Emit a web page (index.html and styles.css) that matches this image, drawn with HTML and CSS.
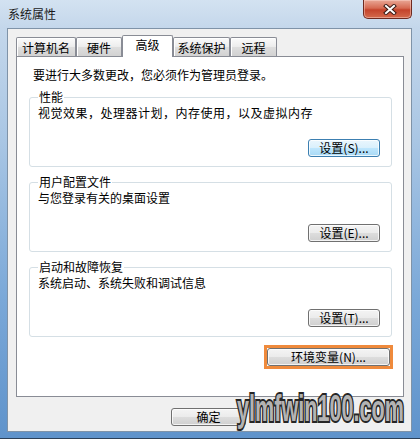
FILE: index.html
```html
<!doctype html>
<html>
<head>
    <meta charset="UTF-8">
    <link rel="stylesheet" href="styles.css">
</head>
<body>
    <div class="window">
        <div class="titlebar">
            <span class="title">系统属性</span>
            <button class="close" title="关闭">
                <svg width="14" height="11" viewBox="0 0 14 11">
                    <path d="M3 2 L11 9 M11 2 L3 9" stroke="#3a1a14" stroke-width="4" stroke-linecap="square"/>
                    <path d="M3 2 L11 9 M11 2 L3 9" stroke="#fff" stroke-width="2" stroke-linecap="square"/>
                </svg>
            </button>
        </div>
        <div class="client">
            <ul class="tabs">
                <li class="tab tab-name">计算机名</li>
                <li class="tab tab-hw">硬件</li>
                <li class="tab tab-adv active">高级</li>
                <li class="tab tab-prot">系统保护</li>
                <li class="tab tab-remote">远程</li>
            </ul>
            <div class="panel">
                <p class="note">要进行大多数更改，您必须作为管理员登录。</p>

                <fieldset class="group">
                    <legend>性能</legend>
                    <p class="desc desc-wide">视觉效果，处理器计划，内存使用，以及虚拟内存</p>
                    <div class="group-actions">
                        <button class="btn btn-set btn-hot">设置(S)...</button>
                    </div>
                </fieldset>

                <fieldset class="group">
                    <legend>用户配置文件</legend>
                    <p class="desc">与您登录有关的桌面设置</p>
                    <div class="group-actions">
                        <button class="btn btn-set">设置(E)...</button>
                    </div>
                </fieldset>

                <fieldset class="group">
                    <legend>启动和故障恢复</legend>
                    <p class="desc">系统启动、系统失败和调试信息</p>
                    <div class="group-actions">
                        <button class="btn btn-set">设置(T)...</button>
                    </div>
                </fieldset>

                <div class="env-row">
                    <span class="ring">
                        <button class="btn btn-env">环境变量(N)...</button>
                    </span>
                </div>
            </div>
            <div class="actions">
                <button class="btn btn-ok">确定</button>
            </div>
        </div>
        <div class="watermark">ylmfwin100.com</div>
    </div>
</body>
</html>
```

FILE: styles.css
```css
* {
    box-sizing: border-box;
}
body {
    margin: 0;
    width: 420px;
    height: 439px;
    overflow: hidden;
    background-color: #23364c;
    font-family: "Noto Sans CJK SC", sans-serif;
    font-size: 12px;
    color: #000;
}

/* aero frame */
.window {
    position: relative;
    width: 420px;
    height: 439px;
    padding: 0 8px 6px 7px;
    display: flex;
    flex-direction: column;
    background: linear-gradient(to bottom, #d3e2f1 0, #c4d7eb 28px, #a9c6e4 140px, #7aa8d8 300px, #5f93cb 439px);
    border-bottom: 1px solid #2c4058;
}

.titlebar {
    height: 28px;
    display: flex;
    justify-content: space-between;
    align-items: flex-start;
}
.title {
    margin-top: 6px;
    padding-left: 1px;
    line-height: 16px;
    color: #1a1a1a;
}
.close {
    width: 49px;
    height: 19px;
    padding: 0;
    border: 1px solid #6e2a20;
    border-top: none;
    border-radius: 0 0 5px 5px;
    background: linear-gradient(to bottom, #e9a796 0, #d66a52 45%, #c4432b 55%, #d46a4c 100%);
    box-shadow: inset 0 0 0 1px rgba(255, 220, 210, 0.45);
    display: flex;
    align-items: center;
    justify-content: center;
}
.close svg {
    margin-left: 4px;
}

/* client area */
.client {
    flex: 1;
    border: 1px solid #7f93a8;
    background-color: #f0f0f0;
    padding: 6px 7px 0 8px;
    display: flex;
    flex-direction: column;
}

.tabs {
    list-style: none;
    margin: 0 0 -1px 0;
    padding: 0;
    height: 22px;
    display: flex;
    align-items: flex-start;
    position: relative;
    z-index: 1;
}
.tab {
    height: 19px;
    margin-top: 2px;
    padding-top: 2px;
    text-align: center;
    line-height: 15px;
    border: 1px solid #898c95;
    border-bottom: none;
    border-radius: 2px 2px 0 0;
    background: linear-gradient(to bottom, #fbfbfb 0, #ececec 50%, #dedede 51%, #d2d2d2 100%);
    box-shadow: inset 1px 1px 0 #fff;
}
.tab.active {
    height: 22px;
    margin-top: 0;
    padding-top: 1px;
    background: #fff;
    box-shadow: none;
}
.tab-name { width: 60px; }
.tab-hw { width: 46px; }
.tab-adv { width: 51px; }
.tab-prot { width: 57px; }
.tab-remote { width: 47px; }

.panel {
    height: 341px;
    background-color: #fff;
    border: 1px solid #898c95;
    padding: 11px 11px 0 12px;
}

.note {
    margin: 0 0 8px 4px;
    line-height: 14px;
}

.group {
    margin: 0 0 8px 0;
    min-width: 0;
    border: 1px solid #d5dfe5;
    border-radius: 3px;
    padding: 2px 11px 9px 8px;
    box-shadow: inset 1px 1px 0 #fff;
}
.group legend {
    padding: 0 1px;
    line-height: 14px;
}
.desc {
    margin: 0;
    line-height: 14px;
}
.desc-wide {
    letter-spacing: 0.5px;
}
.group-actions {
    margin-top: 19px;
    display: flex;
    justify-content: flex-end;
}

/* buttons */
.btn {
    height: 18px;
    padding: 0;
    font: inherit;
    line-height: 16px;
    color: #000;
    border: 1px solid #707070;
    border-radius: 3px;
    background: linear-gradient(to bottom, #f4f4f4 0, #ebebeb 50%, #dddddd 51%, #cfcfcf 100%);
    box-shadow: inset 0 0 0 1px rgba(255, 255, 255, 0.75);
}
.btn-hot {
    border-color: #3c7fb1;
    background: linear-gradient(to bottom, #eaf6fd 0, #d9f0fc 50%, #bee6fd 51%, #a7d9f5 100%);
}
.btn-set {
    width: 72px;
}

.env-row {
    margin-top: 5px;
    margin-right: -1px;
    display: flex;
    justify-content: flex-end;
}
.ring {
    display: flex;
    border: 3px solid #ef8a3c;
}
.btn-env {
    width: 123px;
}

.actions {
    margin-top: 11px;
    padding-left: 155px;
    display: flex;
}
.btn-ok {
    width: 75px;
}

/* site stamp over the bottom right corner */
.watermark {
    position: absolute;
    left: 237px;
    top: 389px;
    font-family: "Liberation Sans", sans-serif;
    font-weight: bold;
    font-size: 36px;
    line-height: 40px;
    color: #b3b3b3;
    -webkit-text-stroke: 4px #262626;
    paint-order: stroke fill;
    transform: scaleX(0.6);
    transform-origin: left top;
    white-space: nowrap;
}
```
